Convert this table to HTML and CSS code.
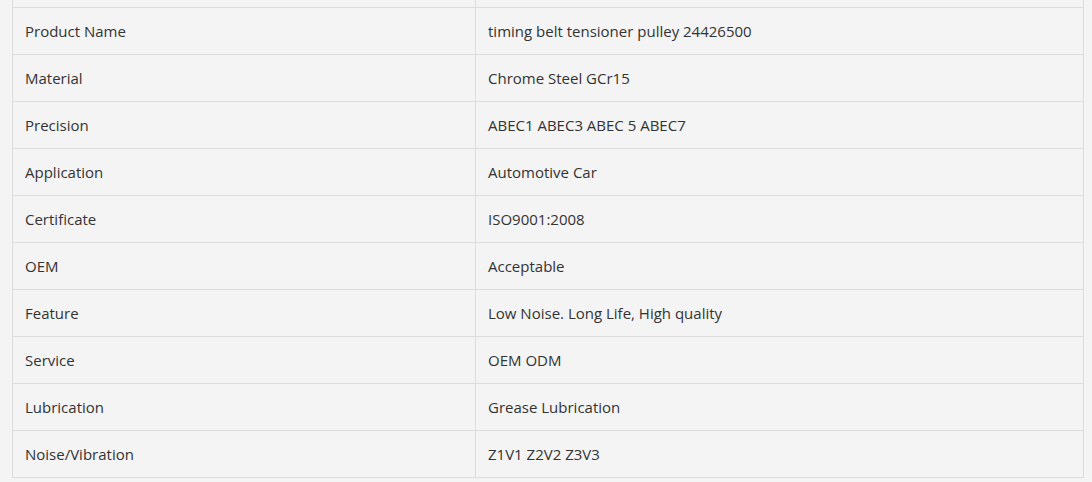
FILE: index.html
```html
<!DOCTYPE html>
<html>
<head>
<meta charset="utf-8">
<link rel="stylesheet" href="styles.css">
</head>
<body>
<table class="specs">
  <tr class="cut"><td></td><td></td></tr>
  <tr><td>Product Name</td><td>timing belt tensioner pulley 24426500</td></tr>
  <tr><td>Material</td><td>Chrome Steel GCr15</td></tr>
  <tr><td>Precision</td><td>ABEC1 ABEC3 ABEC 5 ABEC7</td></tr>
  <tr><td>Application</td><td>Automotive Car</td></tr>
  <tr><td>Certificate</td><td>ISO9001:2008</td></tr>
  <tr><td>OEM</td><td>Acceptable</td></tr>
  <tr><td>Feature</td><td>Low Noise. Long Life, High quality</td></tr>
  <tr><td>Service</td><td>OEM ODM</td></tr>
  <tr><td>Lubrication</td><td>Grease Lubrication</td></tr>
  <tr><td>Noise/Vibration</td><td>Z1V1 Z2V2 Z3V3</td></tr>
</table>
</body>
</html>
```
FILE: styles.css
```css
html, body {
  margin: 0;
  padding: 0;
  background: #f4f4f4;
}
body {
  padding-left: 12px;
  font-family: "Open Sans", "Noto Sans", sans-serif;
  font-size: 15px;
  color: #333;
}
.specs {
  border-collapse: collapse;
  width: 1072px;
  table-layout: fixed;
}
.specs td {
  border: 1px solid #dddddd;
  height: 47px;
  padding: 0 12px;
  box-sizing: border-box;
  vertical-align: middle;
  white-space: nowrap;
}
.specs td:first-child {
  width: 463px;
}
.specs .cut td {
  height: 7px;
  border-top: 0;
}
```
